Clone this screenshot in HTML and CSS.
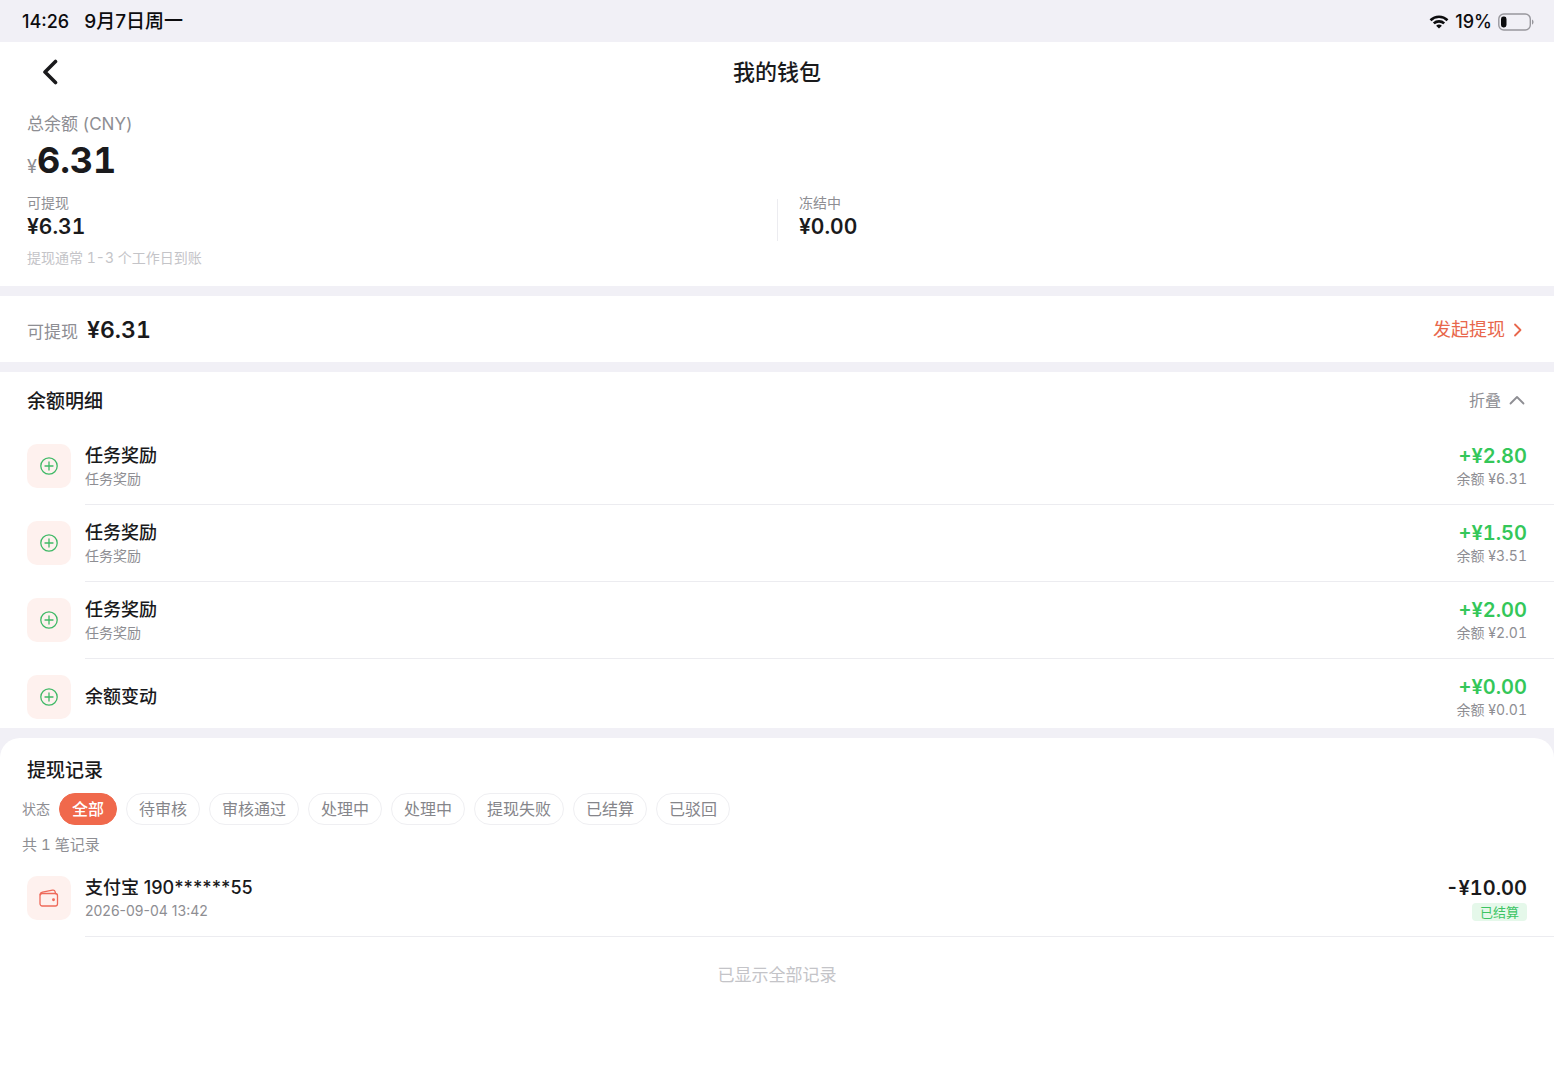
FILE: index.html
```html
<!DOCTYPE html>
<html lang="zh-CN">
<head>
<meta charset="utf-8">
<meta name="viewport" content="width=device-width, initial-scale=1">
<title>我的钱包</title>
<link rel="stylesheet" href="styles.css">
</head>
<body>
<svg class="defs" aria-hidden="true">
  <symbol id="plus" viewBox="0 0 20 20"><circle cx="10" cy="10" r="8.2"/><path d="M10 6v8M6 10h8"/></symbol>
</svg>

<div class="status-bar">
  <div class="status-group status-time"><span>14:26</span><span class="date">9月7日周一</span></div>
  <div class="status-group">
    <svg class="wifi" width="20" height="16" viewBox="0 0 20 16" aria-hidden="true">
      <path d="M1.5 6.2a12.2 12.2 0 0 1 17 0M4.8 9.4a7.6 7.6 0 0 1 10.4 0"/>
      <path class="solid" d="M10 14.6l-2.9-2.8a4.2 4.2 0 0 1 5.8 0z"/>
    </svg>
    <span>19%</span>
    <svg class="battery" width="36" height="18" viewBox="0 0 36 18" aria-hidden="true">
      <rect class="shell" x="0.8" y="1" width="31.5" height="16" rx="5"/>
      <rect x="3" y="3.5" width="5.5" height="11" rx="2.4"/>
      <path class="cap" d="M34 6.4c2 1 2 4.200 0 5.200z"/>
    </svg>
  </div>
</div>

<main>
  <section class="panel">
    <header class="nav">
      <button class="back" type="button" aria-label="返回">
        <svg width="18" height="26" viewBox="0 0 18 26" aria-hidden="true"><path d="M15.500 2.500L5 13l10.500 10.500"/></svg>
      </button>
      <h1>我的钱包</h1>
    </header>
    <div class="summary">
      <p class="label">总余额 (CNY)</p>
      <p class="total"><span class="currency">¥</span>6.31</p>
      <div class="split">
        <div class="split-item"><p class="small">可提现</p><p class="value">¥6.31</p></div>
        <div class="split-item"><p class="small">冻结中</p><p class="value">¥0.00</p></div>
      </div>
      <p class="tip">提现通常 1-3 个工作日到账</p>
    </div>
  </section>

  <section class="panel withdraw">
    <p class="available"><span class="label">可提现</span><strong>¥6.31</strong></p>
    <a class="withdraw-link" href="#withdraw">发起提现
      <svg width="10" height="14" viewBox="0 0 10 14" aria-hidden="true"><path d="M2 1.500L7.500 7 2 12.500"/></svg>
    </a>
  </section>

  <section class="panel">
    <header class="section-head">
      <h2>余额明细</h2>
      <button class="fold" type="button">折叠
        <svg width="16" height="10" viewBox="0 0 16 10" aria-hidden="true"><path d="M1.500 8.500L8 2l6.500 6.500"/></svg>
      </button>
    </header>
    <ul class="list">
      <li class="row">
        <span class="tile"><svg class="plus" aria-hidden="true"><use href="#plus"/></svg></span>
        <div class="row-body">
          <div><p class="name">任务奖励</p><p class="sub">任务奖励</p></div>
          <div class="right"><p class="amount income">+¥2.80</p><p class="sub">余额 ¥6.31</p></div>
        </div>
      </li>
      <li class="row">
        <span class="tile"><svg class="plus" aria-hidden="true"><use href="#plus"/></svg></span>
        <div class="row-body">
          <div><p class="name">任务奖励</p><p class="sub">任务奖励</p></div>
          <div class="right"><p class="amount income">+¥1.50</p><p class="sub">余额 ¥3.51</p></div>
        </div>
      </li>
      <li class="row">
        <span class="tile"><svg class="plus" aria-hidden="true"><use href="#plus"/></svg></span>
        <div class="row-body">
          <div><p class="name">任务奖励</p><p class="sub">任务奖励</p></div>
          <div class="right"><p class="amount income">+¥2.00</p><p class="sub">余额 ¥2.01</p></div>
        </div>
      </li>
      <li class="row row-last">
        <span class="tile"><svg class="plus" aria-hidden="true"><use href="#plus"/></svg></span>
        <div class="row-body">
          <div><p class="name">余额变动</p></div>
          <div class="right"><p class="amount income">+¥0.00</p><p class="sub">余额 ¥0.01</p></div>
        </div>
      </li>
    </ul>
  </section>

  <section class="panel records">
    <h2>提现记录</h2>
    <div class="filters" role="group" aria-labelledby="filter-label">
      <span class="filter-label" id="filter-label">状态</span>
      <button class="chip chip-active" type="button" aria-pressed="true">全部</button>
      <button class="chip" type="button">待审核</button>
      <button class="chip" type="button">审核通过</button>
      <button class="chip" type="button">处理中</button>
      <button class="chip" type="button">处理中</button>
      <button class="chip" type="button">提现失败</button>
      <button class="chip" type="button">已结算</button>
      <button class="chip" type="button">已驳回</button>
    </div>
    <p class="count">共 1 笔记录</p>
    <ul class="list">
      <li class="row">
        <span class="tile">
          <svg class="wallet" width="20" height="18" viewBox="0 0 20 18" aria-hidden="true">
            <rect x="1" y="4.500" width="17.500" height="12.500" rx="2.200"/>
            <path d="M1.200 5.800C1.200 4 2 3.400 3.500 3.100L13.500 1.200c1.500-.3 2.300.3 2.600 1.500l.4 1.800"/>
            <circle cx="14.500" cy="10.800" r="0.800"/>
          </svg>
        </span>
        <div class="row-body">
          <div class="account"><p class="name">支付宝 190******55</p><p class="sub">2026-09-04 13:42</p></div>
          <div class="right"><p class="amount">-¥10.00</p><p class="badge">已结算</p></div>
        </div>
      </li>
    </ul>
    <p class="end">已显示全部记录</p>
  </section>
</main>
</body>
</html>
```
FILE: styles.css
```css
* { box-sizing: border-box; }

body, h1, h2, p, ul { margin: 0; padding: 0; }

body {
  min-height: 100vh;
  background: #fff;
  color: #1a1a1c;
  font-family: Inter, "Noto Sans CJK SC", sans-serif;
  font-size: 14px;
  font-variant-numeric: tabular-nums;
  line-height: 20px;
}

button {
  padding: 0;
  border: 0;
  background: none;
  color: inherit;
  font: inherit;
}

a { text-decoration: none; }
ul { list-style: none; }
svg { display: block; fill: none; stroke: currentColor; stroke-linecap: round; stroke-linejoin: round; }
.defs { position: absolute; width: 0; height: 0; }

/* Status bar */
.status-bar {
  display: flex;
  align-items: center;
  justify-content: space-between;
  height: 42px;
  padding: 1px 20px 0 22px;
  background: #f1f0f6;
  color: #0c0c0e;
  font-size: 18px;
  font-weight: 500;
  font-variant-numeric: normal;
}
.status-group { display: flex; align-items: center; gap: 6px; }
.status-time { gap: 15px; }
.date { font-size: 19px; }
.wifi { stroke-width: 2.600; stroke-linecap: butt; }
.wifi .solid { fill: currentColor; stroke: none; }
.battery rect, .battery .cap { fill: currentColor; stroke: none; }
.battery .shell { fill: none; stroke: #98979d; stroke-width: 1.400; }
.battery .cap { fill: #98979d; }

/* Panels are separated by a band of the page grey */
main { background: #f1f0f6; display: grid; gap: 10px; }
.panel { background: #fff; }

.nav {
  display: grid;
  grid-template-columns: 1fr auto 1fr;
  align-items: center;
  height: 60px;
  padding: 0 40px;
}
.back { width: 18px; }
.back svg { stroke-width: 3.600; }
h1 { font-size: 22px; line-height: 30px; font-weight: 500; }
h2 { padding-top: 3px; font-size: 19px; line-height: 26px; font-weight: 500; }

.summary { padding: 9px 27px 15px; }
.label { color: #8e8e93; font-size: 17px; line-height: 26px; }
.total { font-size: 36px; line-height: 46px; font-weight: 700; }
.currency { color: #8e8e93; font-size: 18px; line-height: 20px; font-weight: 400; }
.split { display: grid; grid-template-columns: 1fr 1fr; margin: 10px 0 4px; }
.split-item + .split-item {
  padding-left: 22px;
  background: linear-gradient(#ececf0, #ececf0) left bottom / 1px 42px no-repeat;
}
.small { color: #8e8e93; }
.value { font-size: 21px; line-height: 28px; font-weight: 600; }
.tip { color: #c4c4c8; line-height: 26px; }

.withdraw {
  display: flex;
  align-items: center;
  justify-content: space-between;
  height: 66px;
  padding: 1px 31px 0 27px;
}
.available { display: flex; align-items: baseline; gap: 9px; }
.available strong { font-size: 23px; line-height: 30px; font-weight: 600; }
.withdraw-link { display: flex; align-items: center; gap: 8px; color: #e8674c; font-size: 18px; line-height: 26px; }
.withdraw-link svg { stroke-width: 1.800; }

.section-head {
  display: flex;
  align-items: center;
  justify-content: space-between;
  height: 56px;
  padding: 0 29px 0 27px;
}
.fold { display: flex; align-items: center; gap: 8px; color: #8e8e93; font-size: 16px; }
.fold svg { stroke-width: 1.800; }

/* Rows */
.row { display: flex; gap: 14px; padding-left: 27px; }
.tile {
  display: grid;
  place-items: center;
  flex: none;
  width: 44px;
  height: 44px;
  margin: 16px 0 17px;
  border-radius: 10px;
  background: #fef1ee;
}
.plus { width: 20px; height: 20px; color: #3fb966; stroke-width: 1.300; }
.wallet { color: #ee6a5a; stroke-width: 1.300; }
.row-body {
  display: flex;
  flex: 1;
  align-items: center;
  justify-content: space-between;
  padding-right: 27px;
  border-bottom: 1px solid #ececf0;
}
.row-last .tile { margin-bottom: 9px; }
.row-last .row-body { padding-top: 7px; border-bottom: 0; }
.name { font-size: 18px; line-height: 26px; font-weight: 500; }
.sub { color: #8e8e93; }
.account { font-variant-numeric: normal; }
.right { display: flex; flex-direction: column; align-items: flex-end; }
.amount { font-size: 20px; line-height: 26px; font-weight: 600; }
.income { color: #34c759; }

/* Withdrawal records */
.records { padding-top: 17px; border-radius: 20px 20px 0 0; }
.records h2 { padding-right: 27px; padding-left: 27px; }
.filters { display: flex; align-items: center; flex-wrap: wrap; gap: 9px; padding: 9px 22px 0; }
.filter-label { color: #8e8e93; }
.chip {
  height: 32px;
  padding: 0 12px;
  border: 1px solid #efeff2;
  border-radius: 16px;
  color: #85858a;
  font-size: 16px;
}
.chip-active { border-color: #f0694c; background: #f0694c; color: #fff; font-weight: 500; }
.count { padding: 7px 22px 2px; color: #8e8e93; font-size: 15px; line-height: 26px; }
.badge {
  margin-top: 2px;
  padding: 0 8px;
  border-radius: 4px;
  background: #e5f8ea;
  color: #3cc463;
  font-size: 13px;
  line-height: 18px;
}
.end { padding: 25px; color: #c4c4c8; font-size: 17px; line-height: 26px; text-align: center; }
```
